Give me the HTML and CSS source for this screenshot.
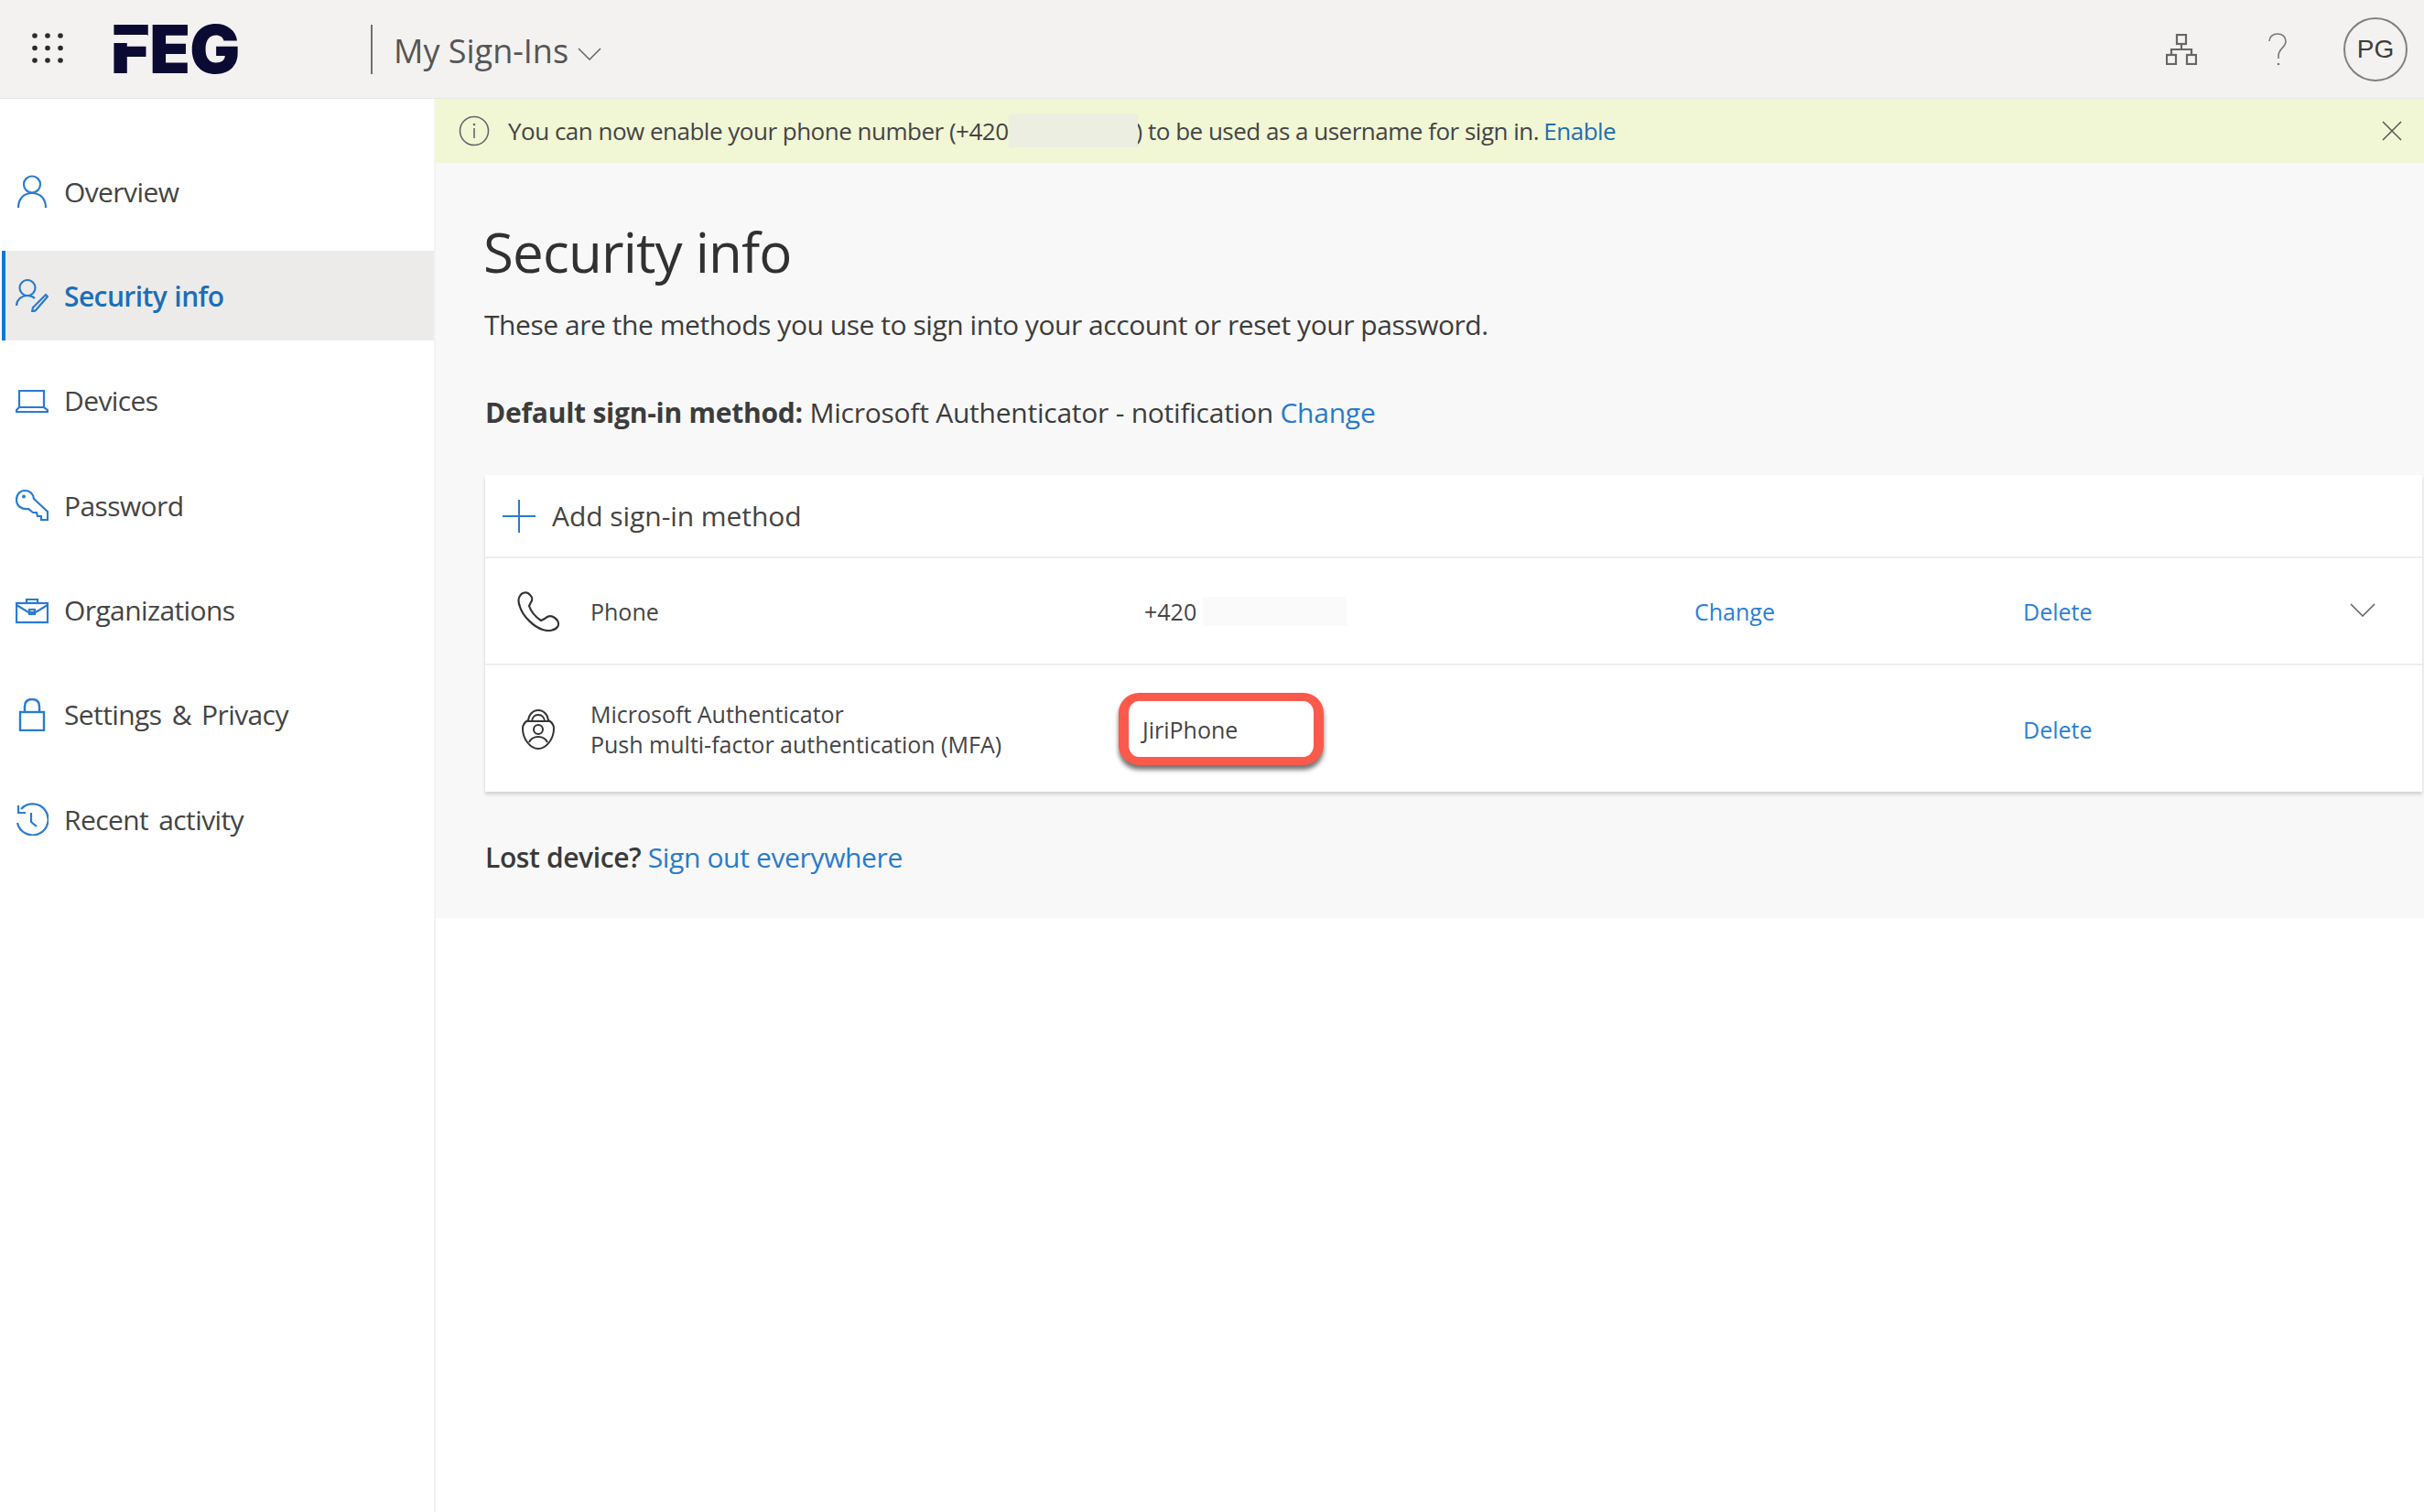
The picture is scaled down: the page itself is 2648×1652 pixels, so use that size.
FILE: index.html
```html
<!DOCTYPE html>
<html lang="en">
<head>
<meta charset="utf-8">
<title>My Sign-Ins</title>
<link rel="stylesheet" href="styles.css">
</head>
<body>
<header class="topbar">
  <svg class="waffle" viewBox="0 0 34 33"><g fill="#2b2b2b"><circle cx="3" cy="3" r="2.8"/><circle cx="17" cy="3" r="2.8"/><circle cx="31" cy="3" r="2.8"/><circle cx="3" cy="16.5" r="2.8"/><circle cx="17" cy="16.5" r="2.8"/><circle cx="31" cy="16.5" r="2.8"/><circle cx="3" cy="30" r="2.8"/><circle cx="17" cy="30" r="2.8"/><circle cx="31" cy="30" r="2.8"/></g></svg>
  <div class="logo">FEG</div>
  <div class="app-title">My Sign-Ins</div>
  <svg class="title-chevron" viewBox="0 0 26 14"><path d="M1 1l12 12L25 1" fill="none" stroke="#666" stroke-width="1.5"/></svg>
  <div class="top-actions">
    <svg class="org-icon" viewBox="0 0 34 34"><g fill="none" stroke="#666" stroke-width="2.2"><rect x="12" y="1" width="10" height="10"/><rect x="1" y="23" width="10" height="10"/><rect x="23" y="23" width="10" height="10"/><path d="M17 11v6M6 23v-6h22v6"/></g></svg>
    <svg class="help-icon" viewBox="0 0 20 36"><path d="M1 9C1 4 5 1 10 1s9 3 9 8c0 7-8 8-8 16v3" fill="none" stroke="#777" stroke-width="1.6"/><circle cx="11" cy="34" r="1.3" fill="#777"/></svg>
    <div class="avatar">PG</div>
  </div>
</header>
<div class="layout">
  <nav class="sidebar">
    <a class="nav-item"><svg class="nav-icon" viewBox="0 0 36 36"><g fill="none" stroke="#2a7bd0" stroke-width="2.2"><circle cx="18" cy="10.5" r="9"/><path d="M3 36c0-10 6-16 15-16s15 6 15 16"/></g></svg><span>Overview</span></a>
    <a class="nav-item active"><svg class="nav-icon" viewBox="0 0 36 36"><g fill="none" stroke="#2a7bd0" stroke-width="2.2"><circle cx="13" cy="9.5" r="8.5"/><path d="M1 29c0-6 5-11 12-11 3 0 6 1 8 3"/><path d="M33 17l2 2-13 15-4 2 1-5z"/></g></svg><span>Security info</span></a>
    <a class="nav-item"><svg class="nav-icon" viewBox="0 0 36 26"><g fill="none" stroke="#2a7bd0" stroke-width="2.2"><path d="M4 20V2h27v18"/><path d="M1 25v-2l3-3h27l4 3v2z"/></g></svg><span>Devices</span></a>
    <a class="nav-item"><svg class="nav-icon" viewBox="0 0 36 34"><path d="M10 1C15 1 19 4 20 10L35 24V33H28V29H24L23 25H19L14 21C7 22 1 18 1 11C1 5 5 1 10 1Z" fill="none" stroke="#2a7bd0" stroke-width="2.2"/><circle cx="9" cy="7.500" r="2" fill="#2a7bd0"/></svg><span>Password</span></a>
    <a class="nav-item"><svg class="nav-icon" viewBox="0 0 36 28"><g fill="none" stroke="#2a7bd0" stroke-width="2.2"><rect x="1" y="6" width="34" height="21"/><path d="M12 6V2h12v4M1 8l13 8h8l13-8"/><rect x="15" y="13" width="6" height="5"/></g></svg><span>Organizations</span></a>
    <a class="nav-item"><svg class="nav-icon" viewBox="0 0 36 36"><g fill="none" stroke="#2a7bd0" stroke-width="2.4"><rect x="5" y="15" width="26" height="20"/><path d="M10 15V9c0-5 3-8 8-8s8 3 8 8v6"/></g></svg><span>Settings &amp; Privacy</span></a>
    <a class="nav-item"><svg class="nav-icon" viewBox="0 0 36 36"><g fill="none" stroke="#2a7bd0" stroke-width="2.2"><path d="M6 7A17 17 0 1 1 2 22"/><path d="M3 3v8h8"/><path d="M17 11v10l6 5"/></g></svg><span>Recent activity</span></a>
  </nav>
  <main class="main">
    <div class="banner">
      <svg class="info-icon" viewBox="0 0 34 34"><g fill="none" stroke="#666" stroke-width="1.6"><circle cx="17" cy="17" r="15.5"/><path d="M17 14v11"/></g><circle cx="17" cy="10" r="1.300" fill="#666"/></svg>
      <div class="banner-text">You can now enable your phone number (+420<span class="mask-banner"></span>) to be used as a username for sign in. <a class="banner-link">Enable</a></div>
      <svg class="close-icon" viewBox="0 0 22 22"><path d="M1 1l20 20M21 1L1 21" fill="none" stroke="#555" stroke-width="1.500"/></svg>
    </div>
    <section class="content">
      <h1 class="page-title">Security info</h1>
      <p class="intro">These are the methods you use to sign into your account or reset your password.</p>
      <p class="default-method"><b>Default sign-in method:</b> Microsoft Authenticator - notification <a class="link">Change</a></p>
      <div class="card">
        <div class="add-row">
          <svg class="plus-icon" viewBox="0 0 36 36"><path d="M18 0v36M0 18h36" stroke="#2a7bd0" stroke-width="2" fill="none"/></svg>
          <span>Add sign-in method</span>
        </div>
        <div class="method-row phone-row">
          <div class="method-icon"><svg class="phone-icon" viewBox="0 0 46 44"><path d="M3 5C5 1 11 0 14 4C17 7 17 9 15 12L13 16C15 22 20 28 26 32L30 30C33 27 37 26 41 29C45 32 46 36 44 39C41 43 34 44 28 42C18 39 6 27 3 17C1 12 1 8 3 5Z" fill="none" stroke="#333" stroke-width="2.200"/></svg></div>
          <div>Phone</div>
          <div class="value">+420<span class="mask-phone"></span></div>
          <a class="link-sm">Change</a>
          <a class="link-sm">Delete</a>
          <svg class="row-chevron" viewBox="0 0 28 15"><path d="M1 1l13 13L27 1" fill="none" stroke="#666" stroke-width="1.600"/></svg>
        </div>
        <div class="method-row auth-row">
          <div class="method-icon"><svg class="auth-icon" viewBox="0 0 36 44"><g fill="none" stroke="#333" stroke-width="2"><path d="M7 14C7 6 12 1 18 1s11 5 11 13"/><path d="M11 14c0-5 3-8 7-8s7 3 7 8"/><path d="M7 13H29"/><path d="M7 12C3 14 1 17 1 21c0 6 2 11 5 15 3 4 8 7 12 7s9-3 12-7c3-4 5-9 5-15 0-4-2-7-6-9"/><circle cx="18" cy="22" r="5"/><path d="M8 36c2-4 6-6 10-6s8 2 10 6"/></g></svg></div>
          <div class="auth-name"><div>Microsoft Authenticator</div><div>Push multi-factor authentication (MFA)</div></div>
          <div class="value"><div class="callout">JiriPhone</div></div>
          <div></div>
          <a class="link-sm">Delete</a>
        </div>
      </div>
      <p class="lost"><b class="lost-label">Lost device?</b> <a class="link">Sign out everywhere</a></p>
    </section>
  </main>
</div>
</body>
</html>
```
FILE: styles.css
```css
* { box-sizing: border-box; }
html, body { margin: 0; height: 100%; }
body {
  width: 2648px;
  height: 1652px;
  overflow: hidden;
  background: #fff;
  color: #3a3a3a;
  font-family: "Open Sans", "Noto Sans", sans-serif;
  display: flex;
  flex-direction: column;
}
a { text-decoration: none; }

.topbar {
  flex: 0 0 108px;
  height: 108px;
  background: #f3f2f1;
  border-bottom: 1px solid #e9e8e7;
  display: flex;
  align-items: center;
  padding-left: 35px;
}
.waffle { width: 34px; height: 33px; margin-bottom: 3px; }
.logo {
  position: relative;
  width: 284px;
  margin-left: 52px;
  font-family: Inter, sans-serif;
  font-weight: 900;
  font-size: 73px;
  line-height: 54px;
  letter-spacing: -0.5px;
  color: #0a0a33;
}
.logo::after {
  content: "";
  position: absolute;
  left: 0;
  top: 11px;
  width: 40px;
  height: 9px;
  background: #f3f2f1;
}
.app-title {
  height: 54px;
  border-left: 2px solid #707070;
  padding-left: 23px;
  font-size: 36px;
  line-height: 58px;
  letter-spacing: 0;
  color: #555;
  width: 226px;
  white-space: nowrap;
}
.title-chevron { width: 26px; height: 14px; margin-top: 10px; }
.top-actions { margin-left: auto; display: flex; align-items: center; padding-right: 18px; }
.org-icon { width: 34px; height: 34px; }
.help-icon { width: 20px; height: 36px; margin-left: 78px; }
.avatar {
  width: 70px;
  height: 70px;
  margin-left: 62px;
  border: 2px solid #808080;
  border-radius: 50%;
  display: flex;
  align-items: center;
  justify-content: center;
  font-family: "Liberation Sans", sans-serif;
  font-size: 28px;
  color: #3c3c3c;
}

.layout { flex: 1; display: flex; min-height: 0; }
.sidebar {
  flex: 0 0 476px;
  border-right: 2px solid #f3f3f3;
  padding-top: 52px;
  display: flex;
  flex-direction: column;
  gap: 16.400px;
}
.nav-item {
  height: 98px;
  margin-left: 2px;
  border-left: 4px solid transparent;
  padding-left: 11px;
  display: flex;
  align-items: center;
  gap: 17px;
  font-size: 30px;
  letter-spacing: -0.6px;
  word-spacing: 4px;
  color: #444;
}
.nav-item.active {
  background: #edebe9;
  border-left-color: #0f78d4;
  color: #1a6fb8;
  font-weight: 600;
  word-spacing: 1px;
}
.nav-icon { width: 36px; height: 36px; flex: none; }

.main { flex: 1; min-width: 0; }
.banner {
  height: 70px;
  background: #f1f6d5;
  display: flex;
  align-items: center;
  padding: 0 24px 0 25px;
}
.info-icon { width: 34px; height: 34px; flex: none; }
.banner-text {
  margin-left: 20px;
  font-size: 26px;
  letter-spacing: -0.5px;
  color: #444;
  display: flex;
  align-items: center;
  white-space: pre;
}
.mask-banner {
  width: 141px;
  height: 36px;
  margin-right: -2px;
  z-index: 1;
  background: #ebeee0;
}
.banner-link { color: #1f6fb0; margin-left: -1px; }
.close-icon { width: 22px; height: 22px; margin-left: auto; flex: none; }

.content {
  background: #f8f8f8;
  padding: 57px 2px 46px 54px;
}
.page-title {
  margin: 0 0 0 -2px;
  font-size: 60px;
  line-height: 80px;
  font-weight: 400;
  letter-spacing: -0.8px;
  color: #323130;
}
.intro {
  margin: 20px 0 0 -1px;
  font-size: 30px;
  line-height: 40px;
  letter-spacing: -0.45px;
  color: #3c3c3c;
}
.default-method {
  margin: 56px 0 0;
  font-size: 30px;
  line-height: 40px;
  letter-spacing: -0.24px;
  color: #3c3c3c;
}
.default-method b { font-weight: 700; }
.link { color: #2a7bc8; }

.card {
  margin-top: 48px;
  background: #fff;
  box-shadow: 0 3px 4px rgba(0, 0, 0, 0.16);
  font-size: 25px;
  color: #444;
}
.add-row {
  height: 91px;
  border-bottom: 2px solid #eeeeee;
  display: flex;
  align-items: center;
  padding-left: 19px;
  gap: 18px;
  font-size: 30px;
  letter-spacing: -0.05px;
}
.plus-icon { width: 36px; height: 36px; }
.method-row {
  display: grid;
  grid-template-columns: 115px 605px 601px 359px 357px 28px;
  align-items: center;
  padding-top: 1px;
}
.phone-row { height: 117px; border-bottom: 2px solid #eeeeee; }
.auth-row { height: 138px; }
.method-icon { display: flex; justify-content: center; }
.phone-icon { width: 46px; height: 44px; }
.auth-icon { width: 36px; height: 44px; }
.auth-name { line-height: 33px; }
.value { display: flex; align-items: center; }
.mask-phone { width: 157px; height: 32px; margin-left: 7px; background: #fafafa; }
.callout {
  width: 224px;
  height: 79px;
  margin-left: -28px;
  padding-left: 15px;
  border: solid #fa5a4c;
  border-width: 9px 11px;
  border-radius: 22px;
  background: #fff;
  box-shadow: 0 5px 5px rgba(0, 0, 0, 0.55);
  display: flex;
  align-items: center;
  color: #444;
}
.link-sm { color: #2b7fd6; }
.row-chevron { width: 28px; height: 15px; margin-top: -4px; }

.lost {
  margin: 52px 0 0;
  font-size: 30px;
  line-height: 40px;
  letter-spacing: -0.4px;
}
.lost .link { letter-spacing: -0.35px; }
.lost-label { font-weight: 600; }
```
